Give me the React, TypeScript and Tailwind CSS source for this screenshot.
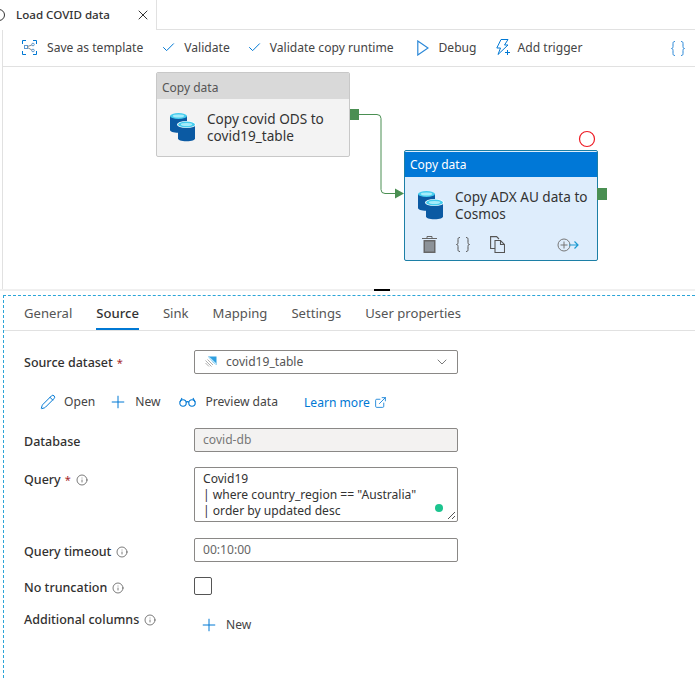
import { Check, ChevronDown, ExternalLink, Info, Pencil, Plus, X } from 'lucide-react'
import type { ReactNode } from 'react'

function DbIcon() {
  return (
    <svg width="26" height="29" viewBox="0 0 26 29" className="mt-[3px] shrink-0">
      <path d="M0 3v14c0 1.600 3 2.800 8.500 2.800S17 18.600 17 17V3z" fill="#0b5aa3" />
      <ellipse cx="8.500" cy="3" rx="8.500" ry="3" fill="#45cdee" />
      <ellipse cx="8.500" cy="3" rx="5.800" ry="1.600" fill="#a5ecfa" />
      <path d="M8 11.500v14c0 1.600 3 2.800 8.500 2.800S25 27.100 25 25.500v-14z" fill="#0b5aa3" />
      <ellipse cx="16.500" cy="11.500" rx="9.500" ry="3.600" fill="#fff" />
      <ellipse cx="16.500" cy="11.500" rx="8.500" ry="3" fill="#45cdee" />
      <ellipse cx="16.500" cy="11.500" rx="5.800" ry="1.600" fill="#a5ecfa" />
    </svg>
  )
}

function TemplateIcon() {
  return (
    <svg width="15" height="15" viewBox="0 0 15 15" fill="none" stroke="#0078d4">
      <path d="M.5 4V.5H4M11 .5h3.500V4M.5 11v3.500H4M11 14.500h3.500V11" />
      <rect x="2.500" y="5.500" width="3" height="3" stroke="#5f9ad0" />
      <circle cx="11" cy="4.500" r="1.300" stroke="#5f9ad0" />
      <circle cx="11" cy="10.500" r="1.300" stroke="#5f9ad0" />
      <path d="M5.500 6.500 9.800 5M5.500 7.500l4.300 2.500" stroke="#8a8a8a" />
    </svg>
  )
}

function PlayIcon() {
  return (
    <svg width="12" height="16" viewBox="0 0 12 16" fill="none" stroke="#2b88d8" strokeWidth="1.200">
      <path d="M.8 1v14l10.200-7z" />
    </svg>
  )
}

function TriggerIcon() {
  return (
    <svg width="15" height="17" viewBox="0 0 15 17" fill="none" stroke="#0078d4">
      <path d="M5 .5h7L8.500 6H12L2 15.500 4.500 9H.8z" strokeLinejoin="round" />
      <path d="M11.500 11v5M9 13.500h5" />
    </svg>
  )
}

function Braces({ className, color }: { className?: string; color: string }) {
  return (
    <svg width="14" height="15" viewBox="0 0 14 15" fill="none" stroke={color} className={className}>
      <path d="M4 .5c-1.500 0-2 .5-2 2v3c0 1.200-.5 2-1.500 2 1 0 1.500.8 1.500 2v3c0 1.500.5 2 2 2" />
      <path d="M10 .5c1.500 0 2 .5 2 2v3c0 1.200.5 2 1.500 2-1 0-1.500.8-1.500 2v3c0 1.500-.5 2-2 2" />
    </svg>
  )
}

function GlassesIcon() {
  return (
    <svg width="17" height="10" viewBox="0 0 17 10" fill="none" stroke="#0078d4" strokeWidth="1.100">
      <circle cx="4" cy="6" r="3.200" />
      <circle cx="13" cy="6" r="3.200" />
      <path d="M7 5.200c1-.7 2-.7 3 0M1 5l2-4M16 5l-2-4" />
    </svg>
  )
}

function TableIcon() {
  return (
    <svg width="12" height="12" viewBox="0 0 12 12">
      <path d="M3 .5h8.500V9L8 6.500z" fill="#2f9fe0" />
      <path d="M4 1.500 11 8" stroke="#bfe8fa" strokeWidth="1.500" />
      <path d="M.5 7 4 10.500M.5 4.500 6.500 10.500M2.500 3.500 8 9" stroke="#9a9a9a" strokeWidth=".8" />
    </svg>
  )
}

function TrashIcon() {
  return (
    <svg width="15" height="17" viewBox="0 0 15 17" fill="none">
      <path d="M0 2.500h15M5 2.500V.5h5v2" stroke="#666" />
      <path d="M1.500 4h12v13h-12z" fill="#666" />
      <path d="M3 5.500h9v10H3z" fill="#8c9298" />
    </svg>
  )
}

function CopyPagesIcon() {
  return (
    <svg width="15" height="17" viewBox="0 0 15 17" fill="none" stroke="#555" strokeWidth="1.100">
      <path d="M9 12.500H.6V.6h6l2.400 2.400" />
      <path d="M5 4.500h5.500l4 4v8H5z" fill="#deedfc" />
      <path d="M10.500 4.500v4h4" />
    </svg>
  )
}

function ToolItem({ icon, label, className }: { icon: ReactNode; label: string; className: string }) {
  return (
    <div className={`flex items-center ${className}`}>
      {icon}
      <span>{label}</span>
    </div>
  )
}

function Label({
  text,
  required,
  info,
  className = '',
}: {
  text: string
  required?: boolean
  info?: boolean
  className?: string
}) {
  return (
    <div className={`flex w-[170px] shrink-0 items-center gap-[5px] text-[12.500px] font-medium text-[#323130] ${className}`}>
      <span>
        {text}
        {required && <span className="ml-[4px] text-[11px] font-normal text-[#a4262c]">*</span>}
      </span>
      {info && <Info size={12} strokeWidth={1.500} className="text-[#505050]" />}
    </div>
  )
}

function Node({
  title,
  name,
  active,
  className,
  children,
}: {
  title: string
  name: ReactNode
  active?: boolean
  className: string
  children?: ReactNode
}) {
  return (
    <div
      className={`absolute w-[194px] overflow-hidden rounded-[2px] border ${
        active ? 'border-[#1c7fa6] bg-[#deedfc] pt-px' : 'border-[#c8c8c8] bg-[#f3f3f3]'
      } ${className}`}
    >
      <div
        className={`flex items-center px-[5px] text-[12px] ${
          active ? 'h-[25px] bg-[#0078d7] text-white' : 'h-[26px] bg-[#d9d9d9] pt-[3px] text-[#555]'
        }`}
      >
        {title}
      </div>
      <div className="flex items-start gap-[11px] pl-[13px] pt-[11px] text-[13.600px] leading-[17px] text-[#333]">
        <DbIcon />
        <div>{name}</div>
      </div>
      {children}
    </div>
  )
}

export default function App() {
  return (
    <div className="h-[678px] w-[695px] overflow-hidden bg-white font-['Noto_Sans',sans-serif] text-[12.100px] text-[#444]">
      <div className="flex h-[30px]">
        <div className="flex w-[157px] items-center whitespace-nowrap border-r border-[#e1e1e1] text-[11.600px] font-medium text-[#333]">
          <svg width="12" height="12" viewBox="0 0 12 12" fill="none" stroke="#333" className="-ml-[7px]">
            <circle cx="6" cy="6" r="5.500" />
            <path d="M6 3v6" />
          </svg>
          <span className="ml-[11px]">Load COVID data</span>
          <X size={16} strokeWidth={1.500} className="ml-[25px] text-[#333]" />
        </div>
        <div className="flex-1 border-b border-[#e1e1e1]" />
      </div>

      <div className="ml-[2px] border-l border-[#e1e1e1]">
        <div className="flex h-[37px] items-center border-b border-[#e1e1e1] pl-[19px] pr-[10px]">
          <ToolItem icon={<TemplateIcon />} label="Save as template" className="gap-[10px]" />
          <ToolItem
            icon={<Check size={15} strokeWidth={1.600} className="text-[#0078d4]" />}
            label="Validate"
            className="ml-[18px] gap-[8px]"
          />
          <ToolItem
            icon={<Check size={15} strokeWidth={1.600} className="text-[#0078d4]" />}
            label="Validate copy runtime"
            className="ml-[17px] gap-[8px]"
          />
          <ToolItem icon={<PlayIcon />} label="Debug" className="ml-[23px] gap-[10px]" />
          <ToolItem icon={<TriggerIcon />} label="Add trigger" className="ml-[19px] gap-[7px]" />
          <Braces className="ml-auto" color="#2b88d8" />
        </div>

        <div className="relative h-[222px]">
          <svg className="absolute left-0 top-0" width="692" height="222" fill="none">
            <path d="M355 47.500h19a4 4 0 0 1 4 4v71a4 4 0 0 0 4 4h10" stroke="#4a8f52" />
            <path d="M392 121.500l9 5-9 5z" fill="#4a8f52" />
            <circle cx="584" cy="72" r="7.500" stroke="#ee1c25" strokeWidth="1.200" />
          </svg>
          <Node title="Copy data" name={<>Copy covid ODS to<br />covid19_table</>} className="left-[153px] top-[5px] h-[85px]" />
          <div className="absolute left-[347px] top-[42px] h-[11px] w-[9px] bg-[#4a8f52]" />
          <Node
            title="Copy data"
            active
            name={<>Copy ADX AU data to<br />Cosmos</>}
            className="left-[401px] top-[83px] h-[111px]"
          >
            <div className="mt-[14px] flex items-center pl-[17px]">
              <TrashIcon />
              <Braces className="ml-[19px]" color="#555" />
              <div className="ml-[20px]">
                <CopyPagesIcon />
              </div>
              <svg className="ml-[52px]" width="22" height="14" viewBox="0 0 22 14" fill="none">
                <circle cx="7" cy="7" r="6" stroke="#777" />
                <path d="M3.500 7h7M7 3.500v7" stroke="#777" />
                <path d="M12 7h9M17.500 3.500 21 7l-3.500 3.500" stroke="#1b9ad1" strokeWidth="1.200" />
              </svg>
            </div>
          </Node>
          <div className="absolute left-[594px] top-[121px] h-[12px] w-[10px] bg-[#4a8f52]" />
        </div>
      </div>

      <div className="relative h-[2px] bg-[#f0f0f0]">
        <div className="absolute left-[374px] top-0 h-[2px] w-[16px] bg-black" />
      </div>
      <div className="h-[4px]" />

      <div className="ml-[3px] h-[383px] border-l border-t border-dashed border-[#2aa5d8]">
        <div className="flex h-[35px] border-b border-[#e1e1e1] pl-[20px] text-[13.100px] text-[#555]">
          <div className="pt-[8px]">General</div>
          <div className="ml-[24px] border-b-2 border-[#0078d4] pt-[8px] font-medium text-[#333]">Source</div>
          <div className="ml-[24px] pt-[8px]">Sink</div>
          <div className="ml-[24px] pt-[8px]">Mapping</div>
          <div className="ml-[24px] pt-[8px]">Settings</div>
          <div className="ml-[24px] pt-[8px]">User properties</div>
        </div>

        <div className="pl-[20px] pt-[19px]">
          <div className="flex h-[24px] items-center">
            <Label text="Source dataset" required className="pt-[2px]" />
            <div className="flex h-[24px] w-[264px] items-center rounded-[2px] border border-[#8a8886] pl-[10px] pr-[7px] text-[#555]">
              <TableIcon />
              <span className="ml-[9px]">covid19_table</span>
              <ChevronDown size={16} strokeWidth={1.300} className="ml-auto text-[#666]" />
            </div>
          </div>

          <div className="mt-[16px] flex h-[24px] items-center pl-[16px]">
            <ToolItem icon={<Pencil size={16} strokeWidth={1.500} className="text-[#0078d4]" />} label="Open" className="gap-[8px]" />
            <ToolItem icon={<Plus size={20} strokeWidth={1.200} className="text-[#0078d4]" />} label="New" className="ml-[13px] gap-[7px]" />
            <ToolItem icon={<GlassesIcon />} label="Preview data" className="ml-[19px] gap-[9px]" />
            <div className="ml-[26px] flex items-center gap-[4px] pt-[2px] text-[#0078d4]">
              <span>Learn more</span>
              <ExternalLink size={13} strokeWidth={1.500} />
            </div>
          </div>

          <div className="mt-[14px] flex h-[24px] items-center">
            <Label text="Database" className="pt-[4px]" />
            <div className="flex h-[24px] w-[264px] items-center rounded-[2px] border border-[#8a8886] bg-[#f3f2f1] pl-[8px] text-[#777]">
              covid-db
            </div>
          </div>

          <div className="mt-[15px] flex items-start">
            <Label text="Query" required info className="pt-[4px]" />
            <div className="relative h-[55px] w-[264px] rounded-[2px] border border-[#8a8886] pl-[8px] pt-[3px] leading-[16px] text-[#333]">
              Covid19
              <br />| where country_region == "Australia"
              <br />| order by updated desc
              <div className="absolute bottom-[9px] right-[14px] h-[8px] w-[8px] rounded-full bg-[#1cc48f]" />
              <svg className="absolute bottom-px right-px" width="9" height="9" stroke="#555">
                <path d="M1 8 8 1M5 8l3-3" />
              </svg>
            </div>
          </div>

          <div className="mt-[16px] flex h-[24px] items-center">
            <Label text="Query timeout" info className="pt-[4px]" />
            <div className="flex h-[24px] w-[264px] items-center rounded-[2px] border border-[#8a8886] pl-[8px] text-[#666]">
              00:10:00
            </div>
          </div>

          <div className="mt-[15px] flex h-[18px] items-center">
            <Label text="No truncation" info className="pt-[4px]" />
            <div className="h-[18px] w-[18px] rounded-[2px] border border-[#555]" />
          </div>

          <div className="mt-[15px] flex items-start">
            <Label text="Additional columns" info className="pt-px" />
            <div className="mt-[5px] flex items-center gap-[7px] pl-[5px]">
              <Plus size={20} strokeWidth={1.200} className="text-[#0078d4]" />
              <span>New</span>
            </div>
          </div>
        </div>
      </div>
    </div>
  )
}
